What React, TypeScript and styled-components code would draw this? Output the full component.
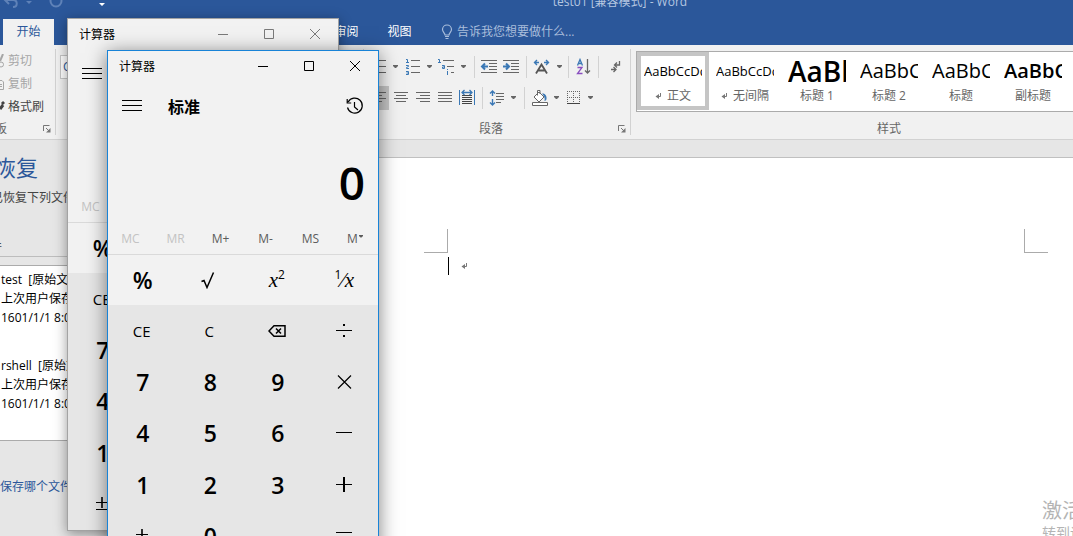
import React from "react";
import styled, { createGlobalStyle, css } from "styled-components";

const GlobalStyle = createGlobalStyle`
  *, *::before, *::after { box-sizing: border-box; }
  body {
    margin: 0;
    font-family: "Open Sans", "Noto Sans CJK SC", sans-serif;
    font-size: 12px;
    line-height: 18px;
    color: #444;
  }
  button {
    margin: 0;
    padding: 0;
    border: 0;
    background: none;
    color: inherit;
    font: inherit;
  }
  svg { display: block; flex: none; }
`;

const Desktop = styled.div`
  position: relative;
  display: flex;
  flex-direction: column;
  height: 100vh;
  overflow: hidden;
  background: #e6e6e6;
`;

/* ---------- Word: title bar and tabs ---------- */

const Header = styled.header`
  flex: none;
  background: #2b579a;
  color: #fff;
`;

const TitleBar = styled.div`
  display: flex;
  align-items: center;
  height: 32px;
  margin-top: -14px;
`;

const QuickAccess = styled.div`
  display: flex;
  align-items: center;
  width: 167px;
`;

const DocTitle = styled.div`
  flex: 1;
  text-align: center;
  color: #b5c6e0;
`;

const TabBar = styled.nav`
  display: flex;
  height: 27px;
  padding-left: 3px;
`;

const Tab = styled.button<{ $active?: boolean; $push?: boolean }>`
  width: 51px;
  margin: 1px 2px 0 0;
  background: ${(p) => (p.$active ? "#f1f1f1" : "none")};
  color: ${(p) => (p.$active ? "#2b579a" : "#fff")};
  ${(p) => p.$push && css`margin-left: 265px;`}
`;

const TellMe = styled.button`
  display: flex;
  align-items: center;
  gap: 4px;
  margin-left: 14px;
  padding-top: 1px;
  color: #a9bddb;
`;

/* ---------- Word: ribbon ---------- */

const Ribbon = styled.div`
  display: flex;
  flex: none;
  height: 95px;
  padding: 4px 0;
  overflow: hidden;
  background: #f1f1f1;
  border-bottom: 1px solid #d2d2d2;
`;

const Group = styled.section<{ $width: number; $grow?: boolean }>`
  display: flex;
  flex-direction: column;
  flex: ${(p) => (p.$grow ? 1 : 0)} 0 ${(p) => p.$width}px;
  border-right: 1px solid #d2d2d2;
`;

const GroupFooter = styled.footer`
  display: flex;
  align-items: center;
  justify-content: space-between;
  height: 18px;
  margin-top: auto;
  margin-bottom: -3px;
  padding-right: 4px;
  color: #666;
`;

const GroupLabel = styled.span<{ $start?: boolean }>`
  flex: 1;
  text-align: ${(p) => (p.$start ? "left" : "center")};
  margin-left: ${(p) => (p.$start ? "-5px" : "0")};
`;

const ClipboardList = styled.div`
  display: flex;
  flex-direction: column;
`;

const ClipboardButton = styled.button<{ $disabled?: boolean }>`
  display: flex;
  align-items: center;
  gap: 3px;
  height: 23px;
  white-space: nowrap;
  color: ${(p) => (p.$disabled ? "#a6a6a6" : "#444")};
`;

const FontBox = styled.div`
  width: 120px;
  height: 24px;
  margin: 6px 0 0 4px;
  padding: 2px;
  border: 1px solid #c6c6c6;
  background: #fff;
  color: #2b579a;
`;

const ToolRow = styled.div`
  display: flex;
  align-items: center;
  gap: 2px;
  height: 31px;
  padding-left: 5px;
  margin-top: 2px;

  & + & { margin-top: 0; }
`;

const Tool = styled.button<{ $caret?: boolean; $active?: boolean }>`
  display: flex;
  align-items: center;
  justify-content: ${(p) => (p.$caret ? "flex-start" : "center")};
  gap: 4px;
  width: ${(p) => (p.$caret ? 32 : 20)}px;
  height: 24px;
  background: ${(p) => (p.$active ? "#c5c5c5" : "none")};
`;

const Separator = styled.span`
  width: 6px;
  height: 22px;
  background: linear-gradient(#d2d2d2, #d2d2d2) center / 1px 100% no-repeat;
`;

const Gallery = styled.div`
  display: flex;
  height: 61px;
  margin: 2px 0 0 5px;
  border: 1px solid #ababab;
  background: #fff;
`;

const StyleCard = styled.button<{ $active?: boolean }>`
  display: flex;
  flex-direction: column;
  align-items: center;
  width: 72px;
  height: 58px;
  border: 4px solid ${(p) => (p.$active ? "#c5c5c5" : "transparent")};
`;

const Sample = styled.span<{ $size: number; $bold?: boolean }>`
  width: 58px;
  height: 31px;
  overflow: hidden;
  text-align: left;
  white-space: nowrap;
  line-height: 30px;
  color: #000;
  font-size: ${(p) => p.$size}px;
  font-weight: ${(p) => (p.$bold ? 600 : 400)};
`;

const CardLabel = styled.span`
  display: flex;
  align-items: center;
  gap: 4px;
  color: #666;
`;

/* ---------- Word: recovery pane and page ---------- */

const Workspace = styled.main`
  display: flex;
  flex: 1;
`;

const Pane = styled.aside`
  flex: 0 0 300px;
  overflow: hidden;
  white-space: nowrap;
`;

const PaneTitle = styled.h2`
  margin: 12px 0 0 -6px;
  font-size: 22px;
  line-height: 30px;
  font-weight: 400;
  color: #2b579a;
`;

const PaneText = styled.p`
  margin: 7px 0 0 -9px;
`;

const PaneHeading = styled.h3`
  margin: 31px 0 0 -10px;
  font-size: 12px;
  font-weight: 400;
  border-bottom: 1px solid #bdbdbd;
`;

const FileList = styled.ul`
  height: 176px;
  margin: 8px 0 0;
  padding: 4px 0 0 1px;
  list-style: none;
  background: #fff;
  border: solid #ababab;
  border-width: 1px 0;
  line-height: 19px;
  color: #000;
`;

const FileItem = styled.li`
  display: flex;
  flex-direction: column;
  margin-bottom: 29px;
`;

const PaneLink = styled.a`
  display: block;
  margin-top: 37px;
  color: #2b579a;
  text-decoration: none;
`;

const DocumentArea = styled.div`
  display: flex;
  flex: 1;
  flex-direction: column;
  padding-top: 17px;
`;

const Page = styled.article`
  flex: 1;
  padding: 71px 25px 0 124px;
  background: #fff;
  border-top: 1px solid #c0c0c0;
`;

const Margins = styled.div`
  display: flex;
  justify-content: space-between;
`;

const Corner = styled.span<{ $side: "left" | "right" }>`
  width: 24px;
  height: 24px;
  border: 0 solid #ababab;
  border-bottom-width: 1px;
  ${(p) => (p.$side === "left" ? "border-right-width: 1px;" : "border-left-width: 1px;")}
`;

const TextLine = styled.div`
  display: flex;
  align-items: center;
  gap: 12px;
  margin-top: 4px;
  padding-left: 24px;
`;

const Cursor = styled.span`
  width: 1px;
  height: 18px;
  background: #000;
`;

const Watermark = styled.div`
  position: absolute;
  right: 0;
  bottom: -6px;
  width: 31px;
  overflow: hidden;
  white-space: nowrap;
  font-size: 14px;
  color: #b4b4b4;
`;

const WatermarkTitle = styled.div`
  font-size: 20px;
  line-height: 26px;
`;

/* ---------- Calculator ---------- */

const Window = styled.section<{ $x: number; $y: number; $active?: boolean }>`
  position: absolute;
  left: ${(p) => p.$x}px;
  top: ${(p) => p.$y}px;
  display: flex;
  flex-direction: column;
  width: 272px;
  height: 513px;
  background: #f2f2f2;
  color: #000;
  border: 1px solid ${(p) => (p.$active ? "#1883d7" : "#a3a3a3")};
  box-shadow: 0 3px ${(p) => (p.$active ? "18px rgba(0, 0, 0, 0.5)" : "12px rgba(0, 0, 0, 0.4)")};
`;

const WindowBar = styled.div`
  display: flex;
  height: 30px;
  padding-left: 11px;
`;

const WindowTitle = styled.h1`
  flex: 1;
  margin: 0;
  font-size: 12px;
  line-height: 32px;
  font-weight: 400;
`;

const WindowButton = styled.button<{ $active?: boolean }>`
  display: flex;
  align-items: center;
  justify-content: center;
  width: 46px;
  color: ${(p) => (p.$active ? "#000" : "#7a7a7a")};
`;

const ModeBar = styled.div`
  display: flex;
  align-items: center;
  height: 50px;
  padding: 0 14px;
`;

const Mode = styled.span`
  flex: 1;
  margin-left: 26px;
  padding-top: 2px;
  font-size: 16px;
  line-height: 24px;
  font-weight: 700;
`;

const Display = styled.output`
  height: 91px;
  padding: 21px 13px 0 0;
  text-align: right;
  font-size: 46px;
  line-height: 60px;
  font-weight: 600;
`;

const MemoryRow = styled.div`
  display: grid;
  grid-template-columns: repeat(6, 1fr);
  height: 33px;
  padding-top: 2px;
  border-bottom: 1px solid #dadada;
`;

const MemoryKey = styled.button`
  display: flex;
  align-items: center;
  justify-content: center;
  color: #5c5c5c;

  &:disabled { color: #c3c3c3; }
`;

const FunctionRow = styled.div`
  display: grid;
  grid-template-columns: repeat(4, 1fr);
  height: 50px;
`;

const KeyPad = styled.div`
  display: grid;
  flex: 1;
  grid-template-columns: repeat(4, 1fr);
  grid-auto-rows: 1fr;
  background: #e6e6e6;
`;

const Key = styled.button<{ $kind?: "digit" | "math" }>`
  display: flex;
  align-items: center;
  justify-content: center;
  font-size: 15px;
  ${(p) => p.$kind === "digit" && css`
    padding-left: 2px;
    font-size: 23px;
    font-weight: 600;
  `}
  ${(p) => p.$kind === "math" && css`
    font-family: "Liberation Serif", serif;
    font-size: 21px;
    font-style: italic;
  `}
`;

const Raised = styled.span`
  align-self: flex-start;
  margin-top: 11px;
  font-family: "Open Sans", sans-serif;
  font-size: 12px;
  font-style: normal;
`;

/* ---------- Icons ---------- */

type IconProps = { w: number; h: number; children: React.ReactNode; color?: string; sw?: number };

const Icon = ({ w, h, children, color = "currentColor", sw = 1 }: IconProps) => (
  <svg width={w} height={h} viewBox={`0 0 ${w} ${h}`} fill="none" stroke={color} strokeWidth={sw} aria-hidden="true">
    {children}
  </svg>
);

const Caret = () => (
  <svg width="5" height="3" viewBox="0 0 5 3" fill="#666" aria-hidden="true">
    <path d="M0 0h5v1L3 3H2L0 1z" />
  </svg>
);

const CaretSlot = styled.span`
  display: flex;
  justify-content: center;
  width: 8px;
`;

const Launcher = () => (
  <Icon w={8} h={8} color="#777">
    <path d="M.5 6V.5H6.500M3 3l3 3" />
    <path d="M7.500 3v4.500H3z" fill="#777" stroke="none" />
  </Icon>
);

const BLUE = "#3b78b5";
const GREY = "#666";

const lines = (rows: [number, number, number][]) => rows.map(([x1, x2, y]) => `M${x1} ${y}.5H${x2}`).join("");

const TextLines = ({ rows }: { rows: [number, number, number][] }) => (
  <Icon w={18} h={18} color={GREY}>
    <path d={lines(rows)} />
  </Icon>
);

const Bullets = () => (
  <Icon w={18} h={18} color={GREY}>
    <path d={lines([[6, 17, 2], [6, 17, 8], [6, 17, 14]])} />
    <path d="M1 1h3v3H1zM1 7h3v3H1zM1 13h3v3H1z" fill={BLUE} stroke="none" />
  </Icon>
);

const Numbering = () => (
  <Icon w={18} h={18} color={GREY}>
    <path d={lines([[8, 17, 2], [8, 17, 8], [8, 17, 14]])} />
    <path d="M3 1.500h1.500V4M3 4.500h3M3 7.500h2.500v1L3.500 9.500v1H6M3 13.500h2.500v3H3M3.500 15h2" stroke={BLUE} />
  </Icon>
);

const Multilevel = () => (
  <Icon w={18} h={18} color={GREY}>
    <path d={lines([[6, 17, 2], [10, 17, 8], [14, 17, 14]])} />
    <path d="M1 1.500h1.500V4M1 4.500h3M5 7.500h2.500V10.500H5.500V9h2M10.500 11v1M10.500 13v4" stroke={BLUE} />
  </Icon>
);

const Indent = ({ out }: { out?: boolean }) => (
  <Icon w={18} h={18} color={GREY}>
    <path d={lines([[1, 17, 2], [9, 17, 5], [9, 17, 8], [9, 17, 11], [1, 17, 14]])} />
    {out ? (
      <path d="M8 8.500H2M5 5.500l-3 3 3 3" stroke={BLUE} strokeWidth="2" />
    ) : (
      <path d="M1 8.500h6M4 5.500l3 3-3 3" stroke={BLUE} strokeWidth="2" />
    )}
  </Icon>
);

const AsianLayout = () => (
  <Icon w={20} h={18} color="#555">
    <path d="M5 15.500l5.500-9 5.500 9M7 12.500h7" strokeWidth="1.800" />
    <path d="M8 4.500H4M6 2L3.500 4.500 6 7M13 4.500h4M15 2l2.500 2.500L15 7" stroke={BLUE} strokeWidth="1.400" />
  </Icon>
);

const Sort = () => (
  <Icon w={18} h={18} color={GREY}>
    <path d="M3.500 7.500L6 1.500 8.500 7.500M4.500 5.500h3" stroke={BLUE} strokeWidth="1.300" />
    <path d="M3.500 9.500h4.500L3.500 15.500h5" stroke="#8a4fc0" strokeWidth="1.300" />
    <path d="M13.500 1v14M11 12.500l2.500 2.500 2.500-2.500" strokeWidth="1.300" />
  </Icon>
);

const Marks = () => (
  <Icon w={18} h={18} color={GREY}>
    <path d="M15.500 3v4H11M13 4.500L10.500 7l2.500 2.500M7 11.500h4.500M9.500 9l2.500 2.500L9.500 14" strokeWidth="1.300" />
  </Icon>
);

const Distribute = () => (
  <Icon w={18} h={18} color={GREY}>
    <path d={lines([[4, 14, 6], [4, 14, 8], [4, 14, 10], [4, 14, 12], [4, 14, 14]])} stroke="#444" />
    <path d="M1.500 1v15M16.500 1v15" stroke={BLUE} />
    <path d="M4 3.500h10M6.500 1L4 3.500 6.500 6M11.500 1L14 3.500 11.500 6" stroke={BLUE} strokeWidth="1.300" />
  </Icon>
);

const Spacing = () => (
  <Icon w={18} h={18} color={GREY}>
    <path d={lines([[9, 17, 4], [9, 17, 7], [9, 17, 10], [9, 14, 13]])} />
    <path d="M5.500 2v5M5.500 10v6M3 4.500L5.500 2 8 4.500M3 13.500L5.500 16 8 13.500" stroke={BLUE} strokeWidth="1.400" />
  </Icon>
);

const Shading = () => (
  <Icon w={19} h={18} color={GREY}>
    <path d="M5 8L10 3l5 5-5 5zM8.500 6.500V1.500h2.500V5" fill="#fff" />
    <path d="M13 4.500c3 0 5 2 4.500 5.500-.3 1.500-1.500 2-2 2 .8-3-.5-5-2.500-7.500z" fill={BLUE} stroke="none" />
    <path d="M3.500 13.500h15v3h-15z" fill="#fff" />
  </Icon>
);

const Borders = () => (
  <Icon w={19} h={18} color={GREY}>
    <path d="M4.500 2v13M16.500 2v13M4 2.500h13" strokeDasharray="1 1" />
    <path d="M10.500 2v13M4 8.500h13" strokeDasharray="1 1" />
    <path d="M4 14.500h13" stroke="#444" />
  </Icon>
);

const ReturnMark = () => (
  <Icon w={8} h={8} color="#777">
    <path d="M5.500 1v3.500H1" />
    <path d="M4 2v5L.5 4.500z" fill="#777" stroke="none" />
  </Icon>
);

const Bulb = () => (
  <Icon w={12} h={16}>
    <path d="M4 11c0-2-2.500-3-2.500-5.500a4.500 4.500 0 0 1 9 0C10.500 8 8 9 8 11z" strokeWidth="1.200" />
    <path d="M4 12.500h4M4.500 14.500h3" />
  </Icon>
);

const Menu = () => (
  <Icon w={20} h={12}>
    <path d="M0 .5h20M0 5.500h20M0 10.500h20" />
  </Icon>
);

const History = () => (
  <Icon w={18} h={18} sw={1.200}>
    <path d="M2.200 5A7.500 7.500 0 1 1 1.500 10.500M1.200 2v4h4M8.500 5v5l3.500 3" />
  </Icon>
);

const Root = () => (
  <Icon w={16} h={18}>
    <path d="M.5 10.500l2.500-1 3 7L12.500 1.500" strokeWidth="1.500" />
  </Icon>
);

const Backspace = () => (
  <Icon w={18} h={12} sw={1.500}>
    <path d="M6 .8h11v10.400H6L1 6z" />
    <path d="M8 3.500l5 5M13 3.500l-5 5" />
  </Icon>
);

const Divide = () => (
  <Icon w={16} h={16}>
    <path d="M0 7.500h16" />
    <path d="M7 1h2v2H7zM7 12h2v2H7z" fill="currentColor" stroke="none" />
  </Icon>
);

const Multiply = () => (
  <Icon w={16} h={16} sw={1.200}>
    <path d="M2 1.500l13 13M15 1.500l-13 13" />
  </Icon>
);

const Minus = () => (
  <Icon w={16} h={16}>
    <path d="M0 7.500h16" />
  </Icon>
);

const Plus = () => (
  <Icon w={16} h={16}>
    <path d="M0 7.500h16" />
    <path d="M8 0v15" strokeWidth="2" />
  </Icon>
);

const PlusMinus = () => (
  <Icon w={14} h={16}>
    <path d="M1 6.500h12M1 13.500h12" />
    <path d="M7 1v11" strokeWidth="1.600" />
  </Icon>
);

const Equals = () => (
  <Icon w={16} h={16}>
    <path d="M0 4.500h16M0 10.500h16" />
  </Icon>
);

/* ---------- Composition ---------- */

const ToolWithCaret = ({ label, children }: { label: string; children: React.ReactNode }) => (
  <Tool $caret aria-label={label}>
    {children}
    <CaretSlot><Caret /></CaretSlot>
  </Tool>
);

const STYLES = [
  { name: "正文", sample: "AaBbCcDd", size: 13, active: true, mark: true },
  { name: "无间隔", sample: "AaBbCcDd", size: 13, mark: true },
  { name: "标题 1", sample: "AaBb", size: 28, bold: true },
  { name: "标题 2", sample: "AaBbC", size: 20 },
  { name: "标题", sample: "AaBbC", size: 20 },
  { name: "副标题", sample: "AaBbC", size: 20, bold: true },
];

const KEYS: { label: string; face: React.ReactNode; digit?: boolean }[] = [
  { label: "CE", face: "CE" },
  { label: "C", face: "C" },
  { label: "退格", face: <Backspace /> },
  { label: "除", face: <Divide /> },
  { label: "7", face: "7", digit: true },
  { label: "8", face: "8", digit: true },
  { label: "9", face: "9", digit: true },
  { label: "乘", face: <Multiply /> },
  { label: "4", face: "4", digit: true },
  { label: "5", face: "5", digit: true },
  { label: "6", face: "6", digit: true },
  { label: "减", face: <Minus /> },
  { label: "1", face: "1", digit: true },
  { label: "2", face: "2", digit: true },
  { label: "3", face: "3", digit: true },
  { label: "加", face: <Plus /> },
  { label: "正负", face: <PlusMinus /> },
  { label: "0", face: "0", digit: true },
  { label: "小数点", face: ".", digit: true },
  { label: "等于", face: <Equals /> },
];

const Calculator = ({ x, y, active }: { x: number; y: number; active?: boolean }) => (
  <Window $x={x} $y={y} $active={active} aria-label="计算器">
    <WindowBar>
      <WindowTitle>计算器</WindowTitle>
      <WindowButton $active={active} aria-label="最小化">
        <Icon w={10} h={10}><path d="M0 5.500h10" /></Icon>
      </WindowButton>
      <WindowButton $active={active} aria-label="最大化">
        <Icon w={10} h={10}><path d="M.5.5h9v9h-9z" /></Icon>
      </WindowButton>
      <WindowButton $active={active} aria-label="关闭">
        <Icon w={10} h={10}><path d="M0 0l10 10M10 0L0 10" /></Icon>
      </WindowButton>
    </WindowBar>
    <ModeBar>
      <button aria-label="菜单"><Menu /></button>
      <Mode>标准</Mode>
      <button aria-label="历史记录"><History /></button>
    </ModeBar>
    <Display>0</Display>
    <MemoryRow>
      <MemoryKey disabled>MC</MemoryKey>
      <MemoryKey disabled>MR</MemoryKey>
      <MemoryKey>M+</MemoryKey>
      <MemoryKey>M-</MemoryKey>
      <MemoryKey>MS</MemoryKey>
      <MemoryKey aria-label="内存">
        M<Icon w={6} h={10}><path d="M1 1h4v1L3.500 3.500h-1L1 2z" fill="currentColor" stroke="none" /></Icon>
      </MemoryKey>
    </MemoryRow>
    <FunctionRow>
      <Key $kind="digit">%</Key>
      <Key aria-label="平方根"><Root /></Key>
      <Key $kind="math">x<Raised>2</Raised></Key>
      <Key $kind="math"><Raised>1</Raised>⁄x</Key>
    </FunctionRow>
    <KeyPad>
      {KEYS.map((k) => (
        <Key key={k.label} aria-label={k.label} $kind={k.digit ? "digit" : undefined}>{k.face}</Key>
      ))}
    </KeyPad>
  </Window>
);

const RecoveredFile = ({ name }: { name: string }) => (
  <FileItem>
    <span>{name}&nbsp; [原始文件]</span>
    <span>上次用户保存</span>
    <span>1601/1/1 8:00</span>
  </FileItem>
);

export default function App() {
  return (
    <Desktop>
      <GlobalStyle />
      <Header>
        <TitleBar>
          <QuickAccess>
            <Icon w={110} h={20} color="#5f82b8" sw={2}>
              <path d="M5 8h8c5 0 5 7 0 7M9 4L5 8l4 4" />
              <path d="M26 9h6l-3 3z" fill="#5f82b8" stroke="none" />
              <circle cx="56" cy="9" r="5.500" />
              <path d="M99 7h7v1h-7zM99 11h6l-3 3z" fill="#fff" stroke="none" />
            </Icon>
          </QuickAccess>
          <DocTitle>test01 [兼容模式] - Word</DocTitle>
        </TitleBar>
        <TabBar>
          <Tab $active>开始</Tab>
          <Tab $push>审阅</Tab>
          <Tab>视图</Tab>
          <TellMe><Bulb />告诉我您想要做什么...</TellMe>
        </TabBar>
      </Header>

      <Ribbon>
        <Group $width={56}>
          <ClipboardList>
            <ClipboardButton $disabled>
              <Icon w={5} h={14}><path d="M3 0L0 7" strokeWidth="2" /><circle cx="1" cy="10.500" r="2.500" /></Icon>
              剪切
            </ClipboardButton>
            <ClipboardButton $disabled>
              <Icon w={5} h={14}><path d="M0 3.500h2L3.500 5v7.500H0M0 7.500h2M0 9.500h2" /></Icon>
              复制
            </ClipboardButton>
            <ClipboardButton>
              <Icon w={5} h={14}><path d="M2 2l2 2M0 9l3-4" strokeWidth="3" /></Icon>
              格式刷
            </ClipboardButton>
          </ClipboardList>
          <GroupFooter><GroupLabel $start>板</GroupLabel><Launcher /></GroupFooter>
        </Group>
        <Group $width={308}>
          <FontBox>C</FontBox>
        </Group>
        <Group $width={267}>
          <ToolRow>
            <ToolWithCaret label="项目符号"><Bullets /></ToolWithCaret>
            <ToolWithCaret label="编号"><Numbering /></ToolWithCaret>
            <ToolWithCaret label="多级列表"><Multilevel /></ToolWithCaret>
            <Separator />
            <Tool aria-label="减少缩进量"><Indent out /></Tool>
            <Tool aria-label="增加缩进量"><Indent /></Tool>
            <Separator />
            <ToolWithCaret label="中文版式"><AsianLayout /></ToolWithCaret>
            <Separator />
            <Tool aria-label="排序"><Sort /></Tool>
            <Separator />
            <Tool aria-label="编辑标记"><Marks /></Tool>
          </ToolRow>
          <ToolRow>
            <Tool $active aria-label="左对齐">
              <TextLines rows={[[2, 16, 3], [2, 12, 6], [2, 16, 9], [2, 12, 12]]} />
            </Tool>
            <Tool aria-label="居中">
              <TextLines rows={[[2, 16, 3], [4, 14, 6], [2, 16, 9], [4, 14, 12]]} />
            </Tool>
            <Tool aria-label="右对齐">
              <TextLines rows={[[2, 16, 3], [6, 16, 6], [2, 16, 9], [6, 16, 12]]} />
            </Tool>
            <Tool aria-label="两端对齐">
              <TextLines rows={[[2, 16, 3], [2, 16, 6], [2, 16, 9], [2, 16, 12]]} />
            </Tool>
            <Tool aria-label="分散对齐"><Distribute /></Tool>
            <Separator />
            <ToolWithCaret label="行距"><Spacing /></ToolWithCaret>
            <Separator />
            <ToolWithCaret label="底纹"><Shading /></ToolWithCaret>
            <ToolWithCaret label="边框"><Borders /></ToolWithCaret>
          </ToolRow>
          <GroupFooter><GroupLabel>段落</GroupLabel><Launcher /></GroupFooter>
        </Group>
        <Group $width={521} $grow>
          <Gallery>
            {STYLES.map((s) => (
              <StyleCard key={s.name} $active={s.active}>
                <Sample $size={s.size} $bold={s.bold}>{s.sample}</Sample>
                <CardLabel>{s.mark && <ReturnMark />}{s.name}</CardLabel>
              </StyleCard>
            ))}
          </Gallery>
          <GroupFooter><GroupLabel>样式</GroupLabel></GroupFooter>
        </Group>
      </Ribbon>

      <Workspace>
        <Pane>
          <PaneTitle>恢复</PaneTitle>
          <PaneText>已恢复下列文件</PaneText>
          <PaneHeading>件</PaneHeading>
          <FileList>
            <RecoveredFile name="test" />
            <RecoveredFile name="rshell" />
          </FileList>
          <PaneLink href="#files">保存哪个文件</PaneLink>
        </Pane>
        <DocumentArea>
          <Page>
            <Margins><Corner $side="left" /><Corner $side="right" /></Margins>
            <TextLine><Cursor /><ReturnMark /></TextLine>
          </Page>
        </DocumentArea>
      </Workspace>

      <Watermark>
        <WatermarkTitle>激活</WatermarkTitle>
        转到设
      </Watermark>

      <Calculator x={67} y={18} />
      <Calculator x={107} y={50} active />
    </Desktop>
  );
}
